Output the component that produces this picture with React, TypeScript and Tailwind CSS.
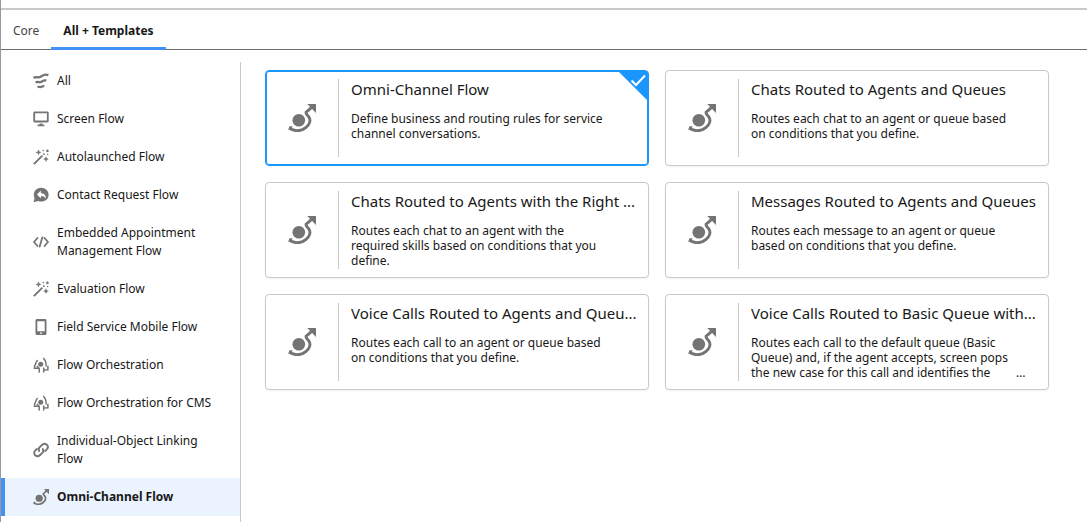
import React, { useState } from "react";

interface IconProps {
  className?: string;
}

interface Category {
  label: string;
  icon: React.FC<IconProps>;
}

interface Template {
  title: string;
  description: string;
  clipped?: boolean;
}

const AllIcon: React.FC<IconProps> = ({ className }) => (
  <svg viewBox="0 0 16 16" className={className} fill="none" stroke="currentColor" aria-hidden="true">
    <path d="M.6 5C3.200 2.800 5 5.600 8 3.600 10.400 2 12.400.4 15.400 2.300" strokeWidth="2.400" />
    <path d="M2.600 9.700C4.800 7.700 6.200 10.200 8.400 8.800 10 7.800 11.400 6.600 13.400 7.600" strokeWidth="2.300" />
    <path d="M4.600 14.300c1.600-1.200 2.400.4 3.800-.4 1-.6 1.700-1.100 3-.6" strokeWidth="2.200" />
  </svg>
);

const ScreenIcon: React.FC<IconProps> = ({ className }) => (
  <svg viewBox="0 0 16 16" className={className} fill="currentColor" aria-hidden="true">
    <path
      fillRule="evenodd"
      d="M1.600.6h12.800c.8 0 1.300.6 1.300 1.300v8.200c0 .8-.5 1.300-1.300 1.300H1.600c-.7 0-1.300-.5-1.300-1.300V1.900C.3 1.200.9.6 1.600.6zM2.100 2.300v7.300h11.800V2.300z"
    />
    <path d="M6.600 12.500h2.800v.9h1c.6 0 1 .4 1 1v.8H4.600v-.8c0-.6.4-1 1-1h1z" />
  </svg>
);

const WandIcon: React.FC<IconProps> = ({ className }) => (
  <svg viewBox="0 0 16 16" className={className} fill="currentColor" aria-hidden="true">
    <path d="M1.500 15.800.2 14.500 8.700 6l1.300 1.300z" />
    <path d="M9.700 5l1.100-1.100 1.300 1.300-1.100 1.100z" />
    <path d="M5.500.5l.9 2 2 .9-2 .9-.9 2-.9-2-2-.9 2-.9z" />
    <path d="M13 7.200l.9 2 2 .9-2 .9-.9 2-.9-2-2-.9 2-.9z" />
    <circle cx="14.400" cy="1.900" r="1.300" />
    <circle cx="10.300" cy="1.500" r=".8" />
    <circle cx="14.700" cy="5.500" r=".7" />
  </svg>
);

const ContactIcon: React.FC<IconProps> = ({ className }) => (
  <svg viewBox="0 0 16 16" className={className} aria-hidden="true">
    <path
      fill="currentColor"
      d="M8.200.8c4.200 0 7.400 3 7.400 6.900s-3.200 6.900-7.400 6.900c-1.100 0-2.200-.2-3.200-.7L1.400 15c-.5.200-.8-.2-.7-.6l.9-3C1 10.300.8 9 .8 7.700.8 3.800 4 .8 8.200.8z"
    />
    <path d="M7.900 3.600v2.500c3 .2 5 1.900 5 5.400-1.200-1.900-2.600-2.600-5-2.600v2.500L4 7.500z" fill="#fff" />
  </svg>
);

const CodeIcon: React.FC<IconProps> = ({ className }) => (
  <svg viewBox="0 0 16 16" className={className} fill="none" stroke="currentColor" strokeWidth="1.800" aria-hidden="true">
    <path d="M4.500 4 1 8l3.500 4M11.500 4 15 8l-3.500 4M9.300 3.400 6.700 12.600" strokeLinecap="round" strokeLinejoin="round" />
  </svg>
);

const PhoneIcon: React.FC<IconProps> = ({ className }) => (
  <svg viewBox="0 0 16 16" className={className} aria-hidden="true">
    <path
      fill="currentColor"
      fillRule="evenodd"
      d="M4 0h8c.9 0 1.500.7 1.500 1.500v13c0 .9-.6 1.500-1.500 1.500H4c-.8 0-1.500-.6-1.500-1.500v-13C2.500.7 3.200 0 4 0zm.3 2.200v10h7.400v-10z"
    />
    <circle cx="8" cy="14.100" r=".9" fill="#fff" />
  </svg>
);

const OrchestrationIcon: React.FC<IconProps> = ({ className }) => (
  <svg viewBox="0 0 16 16" className={className} fill="none" stroke="currentColor" strokeWidth="1.500" aria-hidden="true">
    <circle cx="7.700" cy="7.200" r="2.500" fill="currentColor" stroke="none" />
    <path d="M4.600 3C3.200 4.600 2.700 6.600 1.600 9.200L1.500 11.300H5.800" />
    <path d="M3.900 9.100 6.300 11.500 6.100 15.600" />
    <path d="M10.200 1.200c2.400 1.700 3 4.400 3 8.400M14.900 8.800v4l-4 .2M10.700 10.500v5.100" />
  </svg>
);

const LinkIcon: React.FC<IconProps> = ({ className }) => (
  <svg viewBox="0 0 16 16" className={className} fill="none" stroke="currentColor" strokeWidth="1.900" strokeLinecap="round" aria-hidden="true">
    <path d="M6.200 8.900c-.8-1.300-.5-2.700.5-3.700l2.200-2.200c1.500-1.500 3.500-1.500 4.900-.3 1.400 1.400 1.300 3.400 0 4.700l-1.700 1.700" />
    <path d="M9.800 7.100c.8 1.300.5 2.700-.5 3.700l-2.200 2.200c-1.500 1.500-3.500 1.500-4.900.3-1.400-1.400-1.300-3.400 0-4.700l1.700-1.700" />
  </svg>
);

const OmniIcon: React.FC<IconProps> = ({ className }) => (
  <svg viewBox="0 0 28 28" className={className} aria-hidden="true">
    <circle cx="10.800" cy="16.200" r="6.300" fill="currentColor" />
    <path
      d="M1.300 24C6 27.600 13 27.600 17.800 23.600 21.800 20.200 23 16 20.800 12.800 19.500 10.900 17.400 10 18.200 8.200L24 3.200"
      fill="none"
      stroke="currentColor"
      strokeWidth="3"
    />
    <path d="M19.200 0H28V9z" fill="currentColor" />
    <path d="M.4 25.200 1.800 22 4.500 22.600 3 25.900z" fill="currentColor" />
  </svg>
);

const tabs = ["Core", "All + Templates"];

const categories: Category[] = [
  { label: "All", icon: AllIcon },
  { label: "Screen Flow", icon: ScreenIcon },
  { label: "Autolaunched Flow", icon: WandIcon },
  { label: "Contact Request Flow", icon: ContactIcon },
  { label: "Embedded Appointment Management Flow", icon: CodeIcon },
  { label: "Evaluation Flow", icon: WandIcon },
  { label: "Field Service Mobile Flow", icon: PhoneIcon },
  { label: "Flow Orchestration", icon: OrchestrationIcon },
  { label: "Flow Orchestration for CMS", icon: OrchestrationIcon },
  { label: "Individual-Object Linking Flow", icon: LinkIcon },
  { label: "Omni-Channel Flow", icon: OmniIcon },
];

const templates: Template[] = [
  {
    title: "Omni-Channel Flow",
    description: "Define business and routing rules for service channel conversations.",
  },
  {
    title: "Chats Routed to Agents and Queues",
    description: "Routes each chat to an agent or queue based on conditions that you define.",
  },
  {
    title: "Chats Routed to Agents with the Right ...",
    description: "Routes each chat to an agent with the required skills based on conditions that you define.",
  },
  {
    title: "Messages Routed to Agents and Queues",
    description: "Routes each message to an agent or queue based on conditions that you define.",
  },
  {
    title: "Voice Calls Routed to Agents and Queu...",
    description: "Routes each call to an agent or queue based on conditions that you define.",
  },
  {
    title: "Voice Calls Routed to Basic Queue with...",
    description:
      "Routes each call to the default queue (Basic Queue) and, if the agent accepts, screen pops the new case for this call and identifies the",
    clipped: true,
  },
];

const TemplateCard: React.FC<{ item: Template; selected: boolean; onSelect: () => void }> = ({
  item,
  selected,
  onSelect,
}) => (
  <button
    type="button"
    aria-pressed={selected}
    onClick={onSelect}
    className={`relative flex h-24 min-w-0 overflow-hidden rounded border bg-white py-2 text-left ${
      selected ? "border-[#1b96ff] ring-1 ring-inset ring-[#1b96ff]" : "border-[#c9c9c9] shadow-xs"
    }`}
  >
    <span className="flex w-[73px] shrink-0 items-center justify-center self-stretch border-r border-[#c9c9c9]">
      <OmniIcon className="size-7 text-[#747474]" />
    </span>
    <span className="flex min-w-0 flex-1 flex-col pl-3 pr-1">
      <span className="truncate text-[15px] leading-5">{item.title}</span>
      <span className="mt-3 flex items-end pr-4">
        <span className="flex-1 pr-2 leading-[15px]">{item.description}</span>
        <span className="w-3 leading-[15px]">{item.clipped ? "…" : ""}</span>
      </span>
    </span>
    {selected && (
      <svg viewBox="0 0 30 30" className="absolute right-0 top-0 size-[30px]" aria-hidden="true">
        <path d="M0 0h30v30z" fill="#1b96ff" />
        <path d="M13.500 9.500 18 14 27 4.500" fill="none" stroke="#fff" strokeWidth="2" />
      </svg>
    )}
  </button>
);

const App: React.FC = () => {
  const [tab, setTab] = useState("All + Templates");
  const [category, setCategory] = useState("Omni-Channel Flow");
  const [template, setTemplate] = useState(0);

  return (
    <div className="flex min-h-screen flex-col border-l border-[#999] bg-white pt-2 font-['Noto_Sans',sans-serif] text-[12px] text-[#181818]">
      <nav className="flex h-[42px] border-b border-t-2 border-b-[#706e6b] border-t-[#c9c9c9]" role="tablist">
        {tabs.map((name) => (
          <button
            key={name}
            type="button"
            role="tab"
            aria-selected={tab === name}
            onClick={() => setTab(name)}
            className={`-mb-px border-b-3 px-3 pt-1 ${
              tab === name ? "border-[#4192f6] font-bold" : "border-transparent text-[#444]"
            }`}
          >
            {name}
          </button>
        ))}
      </nav>

      <div className="flex flex-1 pt-3">
        <ul className="w-60 shrink-0 border-r border-[#c9c9c9]">
          {categories.map(({ label, icon: Icon }) => (
            <li key={label}>
              <button
                type="button"
                aria-pressed={category === label}
                onClick={() => setCategory(label)}
                className={`flex w-full items-center gap-2 border-l-4 py-2.5 pl-7 pr-5 text-left leading-[18px] ${
                  category === label ? "border-[#4192f6] bg-[#eaf3fe] font-bold" : "border-transparent"
                }`}
              >
                <Icon className="size-4 shrink-0 text-[#747474]" />
                <span>{label}</span>
              </button>
            </li>
          ))}
        </ul>

        <main className="grid flex-1 grid-cols-2 content-start gap-4 pl-6 pr-[38px] pt-2">
          {templates.map((item, index) => (
            <TemplateCard
              key={item.title}
              item={item}
              selected={template === index}
              onSelect={() => setTemplate(index)}
            />
          ))}
        </main>
      </div>
    </div>
  );
};

export default App;
